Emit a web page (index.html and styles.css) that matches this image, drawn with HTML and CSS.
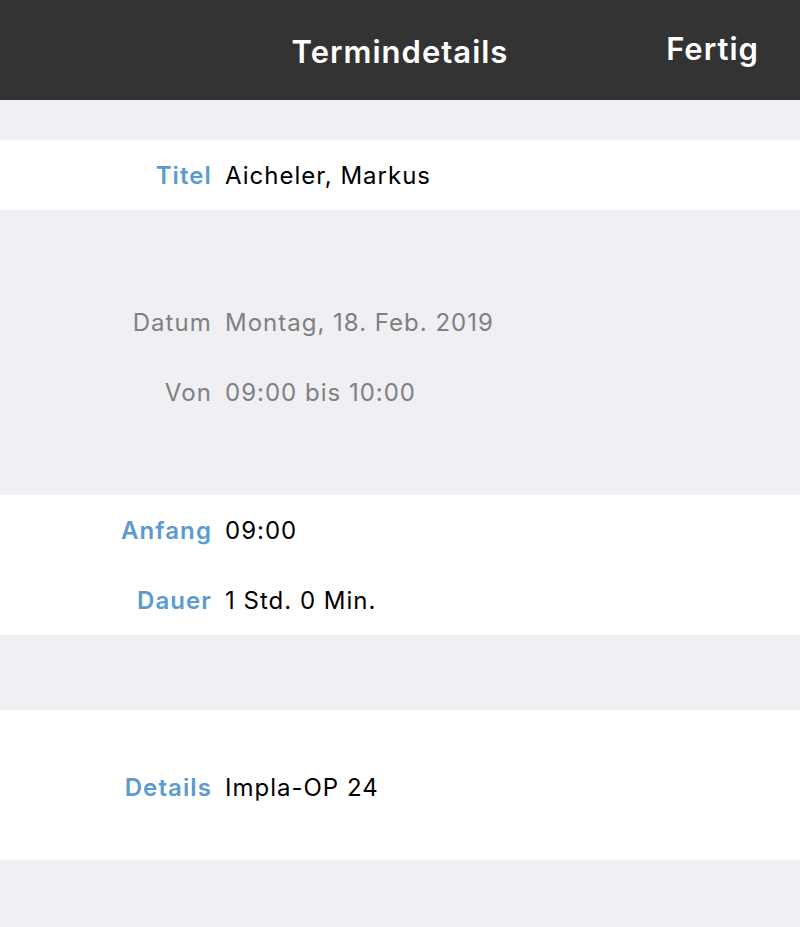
FILE: index.html
```html
<!DOCTYPE html>
<html lang="de">
<head>
  <meta charset="UTF-8">
  <meta name="viewport" content="width=device-width, initial-scale=1.0">
  <title>Termindetails</title>
  <link rel="stylesheet" href="styles.css">
</head>
<body>
  <header class="navbar">
    <div class="nav-title">Termindetails</div>
    <button type="button" class="nav-done">Fertig</button>
  </header>

  <main class="content">
    <section class="group group-top">
      <div class="row">
        <span class="label">Titel</span>
        <span class="value">Aicheler, Markus</span>
      </div>
    </section>

    <section class="group group-info">
      <div class="row">
        <span class="label">Datum</span>
        <span class="value">Montag, 18. Feb. 2019</span>
      </div>
      <div class="row">
        <span class="label">Von</span>
        <span class="value">09:00 bis 10:00</span>
      </div>
    </section>

    <section class="group group-time">
      <div class="row">
        <span class="label">Anfang</span>
        <span class="value">09:00</span>
      </div>
      <div class="row">
        <span class="label">Dauer</span>
        <span class="value">1 Std. 0 Min.</span>
      </div>
    </section>

    <section class="group group-details">
      <div class="row">
        <span class="label">Details</span>
        <span class="value">Impla-OP 24</span>
      </div>
    </section>
  </main>
</body>
</html>
```

FILE: styles.css
```css
body {
  margin: 0;
  background: #efeff4;
  font-family: Inter, "Noto Sans", sans-serif;
  font-size: 24px;
  color: #000;
}
.navbar {
  height: 100px;
  background: #333333;
  color: #fff;
  display: flex;
  align-items: center;
  justify-content: center;
  position: relative;
}
.nav-title {
  font-size: 31px;
  font-weight: 600;
  letter-spacing: 1px;
  margin-top: 2px;
}
.nav-done {
  position: absolute;
  right: 41px;
  top: 30px;
  background: none;
  border: none;
  padding: 0;
  color: #fff;
  font: inherit;
  font-size: 31px;
  font-weight: 600;
  letter-spacing: 1px;
}
.content {
  padding: 40px 0 67px;
}
.group {
  background: #fff;
}
.row {
  height: 70px;
  display: flex;
  align-items: center;
}
.label {
  width: 212px;
  text-align: right;
  font-weight: 600;
  color: #5b9bd0;
  letter-spacing: 1.1px;
}
.value {
  margin-left: 13px;
  letter-spacing: 1px;
}
.group-info {
  background: #efeff4;
  padding: 77px 0 68px;
}
.group-info .label,
.group-info .value {
  font-weight: 400;
  color: #808080;
}
.group-time {
  margin-bottom: 75px;
}
.group-details {
  padding: 42px 0 38px;
}
```
